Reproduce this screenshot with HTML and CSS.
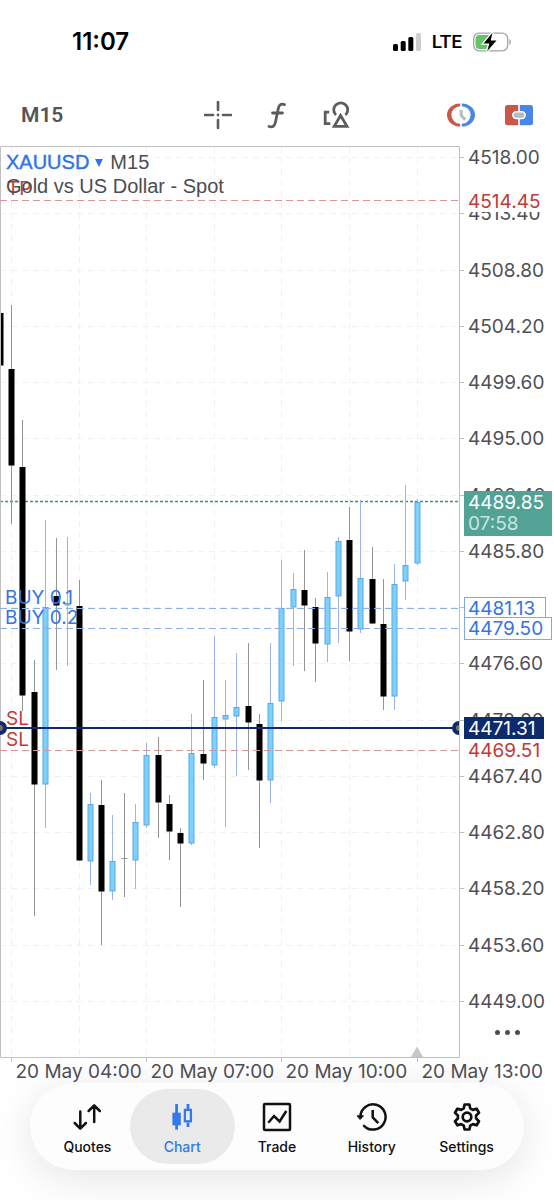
FILE: index.html
```html
<!DOCTYPE html>
<html lang="en">
<head>
<meta charset="utf-8">
<meta name="viewport" content="width=device-width, initial-scale=1">
<title>XAUUSD M15</title>
<link rel="stylesheet" href="styles.css">
</head>
<body>
<div class="app">
  <header class="status">
    <time class="status-time">11:07</time>
    <div class="status-right">
      <svg class="signal" viewBox="0 0 28 18" aria-hidden="true">
        <rect x="0" y="11" width="5" height="7" rx="1.5"/>
        <rect x="7.7" y="8" width="5" height="10" rx="1.5"/>
        <rect x="15.3" y="4" width="5" height="14" rx="1.5"/>
        <rect class="signal-off" x="23" y="0" width="5" height="18" rx="1.5"/>
      </svg>
      <span class="network">LTE</span>
      <svg class="battery" viewBox="0 0 38 20" aria-hidden="true">
        <rect x="0.7" y="1.2" width="34" height="17.6" rx="5.5" fill="none" stroke="#a3a3a3" stroke-width="1.3"/>
        <path d="M36.4 7v6q1.6-.8 1.6-3t-1.6-3z" fill="#a3a3a3"/>
        <path d="M6.500 3H17v14H6.500Q2.500 17 2.500 13V7q0-4 4-4z" fill="#62c466"/>
        <path d="M19.500.8 10.500 11.400h5.800L14.200 19.200 23.500 8.400h-5.800z" fill="#000" stroke="#fff" stroke-width="2.600" paint-order="stroke"/>
      </svg>
    </div>
  </header>

  <div class="toolbar">
    <button class="tool timeframe" type="button">M15</button>
    <div class="tools-center">
      <button class="tool" type="button" aria-label="Crosshair">
        <svg class="tool-icon" viewBox="0 0 28 28"><path d="M14 1v8M14 19v8M1 14h8M19 14h8" fill="none" stroke="#5c5c5c" stroke-width="2.600" stroke-linecap="round"/><circle cx="14" cy="14" r="1.400" fill="#5c5c5c"/></svg>
      </button>
      <button class="tool" type="button" aria-label="Indicators">
        <svg class="tool-icon" viewBox="0 0 28 28"><path d="M21.500 3.600C17.500 2.400 16 4 15.300 7.500L12.600 20.500C11.800 24.800 10 26.700 6 25.500M9.500 12H19.500" fill="none" stroke="#5c5c5c" stroke-width="2.800" stroke-linecap="round"/></svg>
      </button>
      <button class="tool" type="button" aria-label="Objects">
        <svg class="tool-icon" viewBox="0 0 28 28"><path d="M7.200 11.200H3.200V22.700H8.300M14 14A7 7 0 1 1 23.500 14M18.600 14.500 12.200 25.300H25z" fill="none" stroke="#5c5c5c" stroke-width="2.800"/></svg>
      </button>
    </div>
    <div class="tools-right">
      <button class="tool" type="button" aria-label="Trading sessions">
        <svg class="tool-icon" viewBox="0 0 28 28"><path d="M13.200 2.400A13.200 11.600 0 0 0 13.200 25.600V22.800A8.800 8.800 0 0 1 13.200 5.200z" fill="#ca5748"/><path d="M14.800 2.400A13.200 11.600 0 0 1 14.800 25.600V22.800A8.800 8.800 0 0 0 14.800 5.200z" fill="#4a86e8"/><path d="M14.200 9V14.500L18.300 18.600" fill="none" stroke="#b5bdc6" stroke-width="3"/></svg>
      </button>
      <button class="tool" type="button" aria-label="One-click trading">
        <svg class="tool-icon" viewBox="0 0 28 28"><path d="M2.500 4H13.200V24.300H2.500Q0 24.300 0 21.800V6.500Q0 4 2.500 4z" fill="#ca5748"/><path d="M14.800 4H25.500Q28 4 28 6.500V21.800Q28 24.300 25.500 24.300H14.800z" fill="#4a86e8"/><rect x="7.800" y="10.700" width="12.400" height="6.800" rx="3.400" fill="#b3bbc4" stroke="#fff" stroke-width="1.600"/></svg>
      </button>
    </div>
  </div>

  <main class="chart">
    <div class="chart-head">
      <div class="chart-title">
        <button class="symbol" type="button">XAUUSD</button>
        <svg class="caret" viewBox="0 0 8 8" aria-hidden="true"><path d="M0 0H8L4 8z"/></svg>
        <span>M15</span>
      </div>
      <div class="description">Gold vs US Dollar - Spot</div>
    </div>
    <svg id="plot" class="plot" viewBox="0 146 554 937" role="img" aria-label="XAUUSD 15 minute candlestick chart">
      <g id="grid" class="grid"></g>
      <path class="current-line" d="M0 501.500H459"/>
      <g id="candles"></g>
      <path class="frame" d="M.5 1057.500V146.500H459.500V1057.500z"/>
      <path d="M411 1057 417 1046.500 423 1057z" fill="#c8c8c8"/>
      <g id="axis"></g>
      <path class="level stop" d="M0 200.500H459M0 750.500H459"/>
      <path class="level buy" d="M0 608.500H459M0 628.500H459"/>
      <path d="M0 728H459" stroke="#0c2a6c" stroke-width="2"/>
      <path d="M0 721a7 7 0 0 1 0 14zM459 721a7 7 0 0 0 0 14z" fill="#0c2a6c"/>
      <path d="M0 725a3 3 0 0 1 0 6zM459 725a3 3 0 0 0 0 6z" fill="#77706f"/>
      <g class="label stop-text">
        <text x="7" y="195">TP</text>
        <text x="6" y="725">SL</text>
        <text x="6" y="746">SL</text>
      </g>
      <g class="label buy-text">
        <text x="5" y="604">BUY 0.1</text>
        <text x="5" y="624">BUY 0.2</text>
      </g>
      <rect x="464" y="190" width="89" height="22" fill="#fff"/>
      <text class="label stop-text" x="468" y="208">4514.45</text>
      <rect x="464" y="491" width="88" height="45" fill="#52a296"/>
      <text class="label" x="468" y="509" fill="#fff">4489.85</text>
      <text class="label" x="468" y="530" fill="#c5e6df">07:58</text>
      <rect class="buy-box" x="464.500" y="597.500" width="81" height="20"/>
      <rect class="buy-box" x="464.500" y="617.500" width="87" height="22"/>
      <text class="label buy-text" x="468" y="615">4481.13</text>
      <text class="label buy-text" x="468" y="635">4479.50</text>
      <rect x="464" y="717" width="80" height="22" fill="#0c2a6c"/>
      <text class="label" x="468" y="735" fill="#fff">4471.31</text>
      <text class="label stop-text" x="468" y="757">4469.51</text>
    </svg>
    <button class="more" type="button" aria-label="More"><i></i><i></i><i></i></button>
  </main>

  <nav class="tabs">
    <button class="tab" type="button">
      <svg class="tab-icon" viewBox="0 0 32 32"><path d="M9.300 10.500V27.500M3.700 22 9.300 27.600 14.900 22M23.200 21V4.500M17.600 10 23.200 4.400 28.800 10"/></svg>
      <span>Quotes</span>
    </button>
    <button class="tab tab-active" type="button" aria-current="page">
      <svg class="tab-icon" viewBox="0 0 32 32"><path d="M10.600 3V28.700" stroke-width="2.800" stroke-linecap="butt"/><rect x="6.400" y="11.700" width="8.400" height="12.600" fill="currentColor" stroke="none"/><path d="M22 3V8M22 21.500V26" stroke-width="2.800" stroke-linecap="butt"/><rect x="18.900" y="8.900" width="6" height="11.400" stroke-width="2.300" stroke-linejoin="miter"/></svg>
      <span>Chart</span>
    </button>
    <button class="tab" type="button">
      <svg class="tab-icon" viewBox="0 0 32 32"><rect x="3" y="3" width="26" height="26" rx="1"/><path d="M7.300 21.700 13 15 18.600 20.500 25.300 10" stroke-linecap="butt" stroke-linejoin="miter"/></svg>
      <span>Trade</span>
    </button>
    <button class="tab" type="button">
      <svg class="tab-icon" viewBox="0 0 32 32"><path d="M4.400 16A12.600 12.600 0 1 1 8 24.800"/><path d="M1.500 14.800H7.500L4.300 18.200z" fill="currentColor" stroke-width="1"/><path d="M16.700 9V16.300L22.300 22.200" stroke-linecap="butt"/></svg>
      <span>History</span>
    </button>
    <button class="tab" type="button">
      <svg class="tab-icon" viewBox="-16 -16 32 32"><path d="M-3.200-8.700-2.400-12.500H2.400L3.200-8.700 5.900-7.100 9.600-8.300 12-4.200 9.100-1.600V1.600L12 4.200 9.600 8.300 5.900 7.100 3.200 8.700 2.400 12.500H-2.400L-3.200 8.700-5.900 7.100-9.600 8.300-12 4.200-9.100 1.600V-1.600L-12-4.200-9.600-8.300-5.900-7.100z" stroke-width="2.700"/><circle r="4.300" stroke-width="2.700"/></svg>
      <span>Settings</span>
    </button>
  </nav>
</div>
<script src="chart.js"></script>
</body>
</html>
```
FILE: styles.css
```css
* {
  box-sizing: border-box;
}

body {
  margin: 0;
  background: #fff;
  font-family: Inter, "Liberation Sans", sans-serif;
  color: #4c4d52;
}

button {
  margin: 0;
  padding: 0;
  border: 0;
  background: none;
  color: inherit;
  font: inherit;
  cursor: pointer;
}

.app {
  display: flex;
  flex-direction: column;
  min-height: 100vh;
  overflow: hidden;
}

.status {
  display: flex;
  align-items: center;
  justify-content: space-between;
  height: 83px;
  padding: 0 43px 0 72px;
  color: #000;
}

.status-time {
  font-size: 24px;
  font-weight: 600;
}

.status-right {
  display: flex;
  align-items: center;
  gap: 11px;
}

.signal {
  width: 28px;
  height: 18px;
}

.signal-off {
  fill: #cfcfcf;
}

.network {
  font-family: Roboto, sans-serif;
  font-size: 19px;
  font-weight: 500;
}

.battery {
  width: 38px;
  height: 20px;
}

.toolbar {
  display: grid;
  grid-template-columns: 1fr auto 1fr;
  align-items: center;
  height: 63px;
  padding: 0 21px;
}

.tool {
  display: flex;
  align-items: center;
  justify-content: center;
}

.timeframe {
  justify-self: start;
  font-family: Roboto, sans-serif;
  font-size: 21px;
  font-weight: 600;
  color: #555;
}

.tools-center,
.tools-right {
  display: flex;
  gap: 31px;
}

.tools-right {
  justify-self: end;
  gap: 30px;
}

.tool-icon {
  width: 28px;
  height: 28px;
}

.chart {
  position: relative;
}

.plot {
  display: block;
  width: 100%;
  height: auto;
}

.chart-head {
  position: absolute;
  top: 4px;
  left: 6px;
  font-family: "Liberation Sans", Arial, sans-serif;
  font-size: 20px;
  line-height: 24px;
}

.chart-title {
  display: flex;
  align-items: center;
}

.symbol {
  color: #2f73ea;
  -webkit-text-stroke: 0.4px #2f73ea;
}

.caret {
  width: 8px;
  height: 8px;
  margin: 2px 7px 0 6px;
  fill: #2f73ea;
}

.grid {
  fill: none;
  stroke: #f1f1f1;
  stroke-dasharray: 6 5;
}

.frame {
  fill: none;
  stroke: #c0c0c0;
}

.tick {
  stroke: #c0c0c0;
}

.current-line {
  stroke: #3b9183;
  stroke-width: 1.3;
  stroke-dasharray: 3 2;
}

.level {
  stroke-dasharray: 7 4;
}

.stop {
  stroke: #dc9494;
}

.buy {
  stroke: #8daeea;
}

.label {
  font-family: Inter, sans-serif;
  font-size: 19px;
}

.axis-text {
  fill: #4f5056;
}

.stop-text {
  fill: #c03a38;
}

.buy-text {
  fill: #3474e4;
}

.buy-box {
  fill: #fff;
  stroke: #7ea9ee;
}

.up {
  fill: #7ad1fa;
  stroke: #5ea6e8;
}

.down {
  fill: #000;
  stroke: #000;
}

.wick-up {
  stroke: #9ab4ea;
}

.wick-down {
  stroke: #949494;
}

.more {
  position: absolute;
  right: 34px;
  bottom: 39px;
  display: flex;
  align-items: center;
  gap: 5px;
  height: 24px;
}

.more i {
  width: 5px;
  height: 5px;
  border-radius: 50%;
  background: #4c4d52;
}

.tabs {
  position: relative;
  display: flex;
  height: 87px;
  margin: 0 30px 30px;
  padding: 6px 10px;
  border-radius: 44px;
  background: #fdfdfd;
  box-shadow: 0 8px 44px rgba(0, 0, 0, 0.11);
}

.tab {
  position: relative;
  display: flex;
  flex: 1 1 0;
  flex-direction: column;
  align-items: center;
  gap: 5px;
  padding-top: 12px;
  font-size: 14px;
  font-weight: 500;
  line-height: 18px;
  color: #111;
}

.tab-active {
  color: #3478ea;
}

.tab-active::before {
  content: "";
  position: absolute;
  inset: 0 -5px;
  border-radius: 38px;
  background: #eaeaea;
}

.tab-icon {
  width: 32px;
  height: 32px;
  fill: none;
  stroke: currentColor;
  stroke-width: 2.5;
  stroke-linecap: round;
  stroke-linejoin: round;
}

.tab-icon,
.tab span {
  position: relative;
}
```
FILE: chart.js
```js
const NS = "http://www.w3.org/2000/svg";

function add(parent, name, attrs, text) {
  const node = document.createElementNS(NS, name);
  for (const key in attrs) node.setAttribute(key, attrs[key]);
  if (text) node.textContent = text;
  parent.appendChild(node);
}

const grid = document.getElementById("grid");
const axis = document.getElementById("axis");
const candles = document.getElementById("candles");

// Price rows, one every 4.60
for (let i = 0; i < 16; i++) {
  const y = Math.round(157 + 56.25 * i) + 0.5;
  add(grid, "path", { d: `M0 ${y}H459` });
  add(axis, "path", { class: "tick", d: `M459 ${y}h5` });
  add(axis, "text", { class: "label axis-text", x: 468, y: y + 6.5 }, (4518 - 4.6 * i).toFixed(2));
}

// Time columns, every second one is labelled
const times = ["20 May 04:00", "20 May 07:00", "20 May 10:00", "20 May 13:00"];
for (let i = 0; i < 7; i++) {
  const x = Math.round(11 + 67.6 * i) + 0.5;
  add(grid, "path", { d: `M${x} 147V1057` });
  if (i % 2 === 0) {
    add(axis, "path", { class: "tick", d: `M${x} 1058v4` });
    add(axis, "text", { class: "label axis-text", x: x + 4, y: 1078 }, times[i / 2]);
  }
}

// direction, wick top, wick bottom, body top, body bottom
const data = [
  ["d", 313, 365, 313, 365],
  ["d", 305, 524, 369, 465],
  ["d", 420, 711, 467, 695],
  ["d", 660, 916, 692, 784],
  ["u", 520, 828, 607, 784],
  ["d", 538, 670, 596, 605],
  ["u", 537, 666, 603, 605],
  ["d", 580, 861, 606, 860],
  ["u", 793, 885, 804, 861],
  ["d", 780, 945, 805, 891],
  ["u", 815, 900, 861, 891],
  ["x", 793, 897, 858, 858],
  ["u", 804, 889, 822, 860],
  ["u", 743, 828, 755, 825],
  ["d", 737, 838, 755, 802],
  ["d", 795, 860, 804, 831],
  ["d", 828, 907, 833, 843],
  ["u", 714, 845, 753, 843],
  ["d", 680, 780, 754, 763],
  ["u", 636, 768, 717, 765],
  ["u", 680, 827, 715, 719],
  ["u", 653, 776, 707, 716],
  ["d", 643, 770, 706, 722],
  ["d", 714, 848, 724, 780],
  ["u", 643, 803, 703, 780],
  ["u", 560, 721, 608, 701],
  ["u", 573, 666, 589, 607],
  ["d", 550, 671, 590, 605],
  ["d", 598, 682, 607, 643],
  ["u", 572, 662, 597, 644],
  ["u", 537, 643, 541, 596],
  ["d", 507, 661, 540, 631],
  ["u", 500, 633, 578, 629],
  ["d", 547, 624, 579, 623],
  ["d", 579, 710, 624, 696],
  ["u", 564, 710, 584, 696],
  ["u", 485, 600, 565, 581],
  ["u", 499, 565, 502, 563]
];

data.forEach(([dir, high, low, top, bottom], i) => {
  const x = Math.round(11 + 11.27 * (i - 1)) + 0.5;
  add(candles, "path", { class: dir === "u" ? "wick-up" : "wick-down", d: `M${x} ${high}V${low}` });
  if (dir === "x") {
    add(candles, "path", { class: "wick-down", d: `M${x - 3} ${top + 0.5}h6` });
  } else {
    add(candles, "rect", {
      class: dir === "u" ? "up" : "down",
      x: x - 2.5, y: top + 0.5, width: 5, height: Math.max(1, bottom - top - 0.5)
    });
  }
});
```
